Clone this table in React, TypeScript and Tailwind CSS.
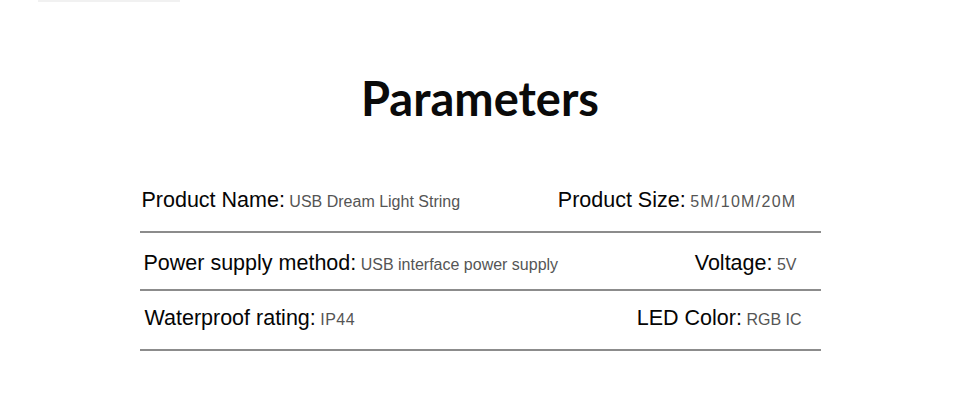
import React from 'react'

type Spec = { label: string; value: string; valueClass?: string }

const rows: { left: Spec; right: Spec; h: string; leftPad: string; rightPad: string }[] = [
  {
    left: { label: 'Product Name:', value: 'USB Dream Light String' },
    right: { label: 'Product Size:', value: '5M/10M/20M', valueClass: 'tracking-[1.3px]' },
    h: 'h-[58px] pb-[18px]',
    leftPad: 'pl-[2px]',
    rightPad: 'pr-[24px]',
  },
  {
    left: { label: 'Power supply method:', value: 'USB interface power supply' },
    right: { label: 'Voltage:', value: '5V' },
    h: 'h-[58px] pb-[13px]',
    leftPad: 'pl-[4px]',
    rightPad: 'pr-[24px]',
  },
  {
    left: { label: 'Waterproof rating:', value: 'IP44', valueClass: 'tracking-[0.5px]' },
    right: { label: 'LED Color:', value: 'RGB IC' },
    h: 'h-[60px] pb-[18px]',
    leftPad: 'pl-[5px]',
    rightPad: 'pr-[19px]',
  },
]

const Item = ({ label, value, valueClass }: Spec) => (
  <span className="whitespace-nowrap leading-[24px]">
    <span className="text-[21.5px] text-[#050505]">{label}</span>{' '}
    <span className={`text-[16px] text-[#555] ${valueClass ?? ''}`}>{value}</span>
  </span>
)

export default function App() {
  return (
    <div className="w-[960px] h-[400px] bg-white font-['Liberation_Sans',Arial,sans-serif] overflow-hidden">
      <div className="ml-[38px] w-[142px] h-[2px] bg-[#f1f1f1]" />

      <div className="mx-auto w-[681px]">
        <h1 className="mt-[68px] text-center font-['Lato',sans-serif] font-bold text-[47px] leading-[56px] text-[#0a0a0a]">
          Parameters
        </h1>

        <div className="mt-[49px]">
          {rows.map((r, i) => (
            <div
              key={i}
              className={`flex items-end justify-between border-b-2 border-[#8c8c8c] ${r.h}`}
            >
              <div className={`${r.leftPad} h-[24px] flex items-center`}>
                <Item {...r.left} />
              </div>
              <div className={`${r.rightPad} h-[24px] flex items-center`}>
                <Item {...r.right} />
              </div>
            </div>
          ))}
        </div>
      </div>
    </div>
  )
}
